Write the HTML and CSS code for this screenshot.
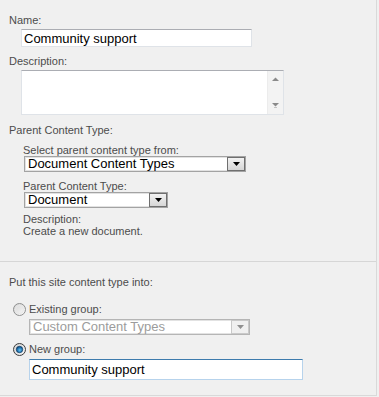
FILE: index.html
```html
<!DOCTYPE html>
<html>
<head>
<meta charset="utf-8">
<link rel="stylesheet" href="styles.css">
</head>
<body>
<div class="page">
  <section class="sec sec-top">
    <div class="lbl">Name:</div>
    <div class="textbox tb-name">Community support</div>
    <div class="lbl lbl-desc">Description:</div>
    <div class="textarea">
      <div class="ta-body"></div>
      <div class="ta-scroll">
        <svg width="7" height="5" viewBox="0 0 7 5"><polygon points="3.5,0.5 7,4 0,4" fill="#8a8a8a"/></svg>
        <svg width="7" height="5" viewBox="0 0 7 5"><polygon points="0,0 7,0 3.5,3.5" fill="#8a8a8a"/><rect x="2" y="4" width="3" height="1" fill="#c4c4c4"/></svg>
      </div>
    </div>
    <div class="lbl lbl-parent">Parent Content Type:</div>
    <div class="sub">
      <div class="sublbl">Select parent content type from:</div>
      <div class="select sel-from">
        <span class="sel-text">Document Content Types</span>
        <span class="sel-btn"><svg width="7" height="4" viewBox="0 0 7 4"><polygon points="0,0 7,0 3.5,4" fill="#000"/></svg></span>
      </div>
      <div class="sublbl sublbl-type">Parent Content Type:</div>
      <div class="select sel-type">
        <span class="sel-text">Document</span>
        <span class="sel-btn"><svg width="7" height="4" viewBox="0 0 7 4"><polygon points="0,0 7,0 3.5,4" fill="#000"/></svg></span>
      </div>
      <div class="sublbl sublbl-desc">Description:</div>
      <div class="sublbl">Create a new document.</div>
    </div>
  </section>
  <section class="sec sec-bottom">
    <div class="lbl">Put this site content type into:</div>
    <div class="radio-row row-existing">
      <svg class="radio" width="13" height="13" viewBox="0 0 13 13">
        <defs>
          <linearGradient id="rg1" x1="0" y1="0" x2="1" y2="1">
            <stop offset="0" stop-color="#d4d4d4"/>
            <stop offset="1" stop-color="#fbfbfb"/>
          </linearGradient>
        </defs>
        <circle cx="6.5" cy="6.5" r="6" fill="url(#rg1)" stroke="#8e8f8f"/>
        <circle cx="6.5" cy="6.5" r="4" fill="none" stroke="#e8e8e8"/>
      </svg>
      <span class="radio-lbl">Existing group:</span>
    </div>
    <div class="select sel-disabled">
      <span class="sel-text">Custom Content Types</span>
      <span class="sel-btn"><svg width="7" height="4" viewBox="0 0 7 4"><polygon points="0,0 7,0 3.5,4" fill="#8f8f8f"/></svg></span>
    </div>
    <div class="radio-row row-new">
      <svg class="radio" width="13" height="13" viewBox="0 0 13 13">
        <defs>
          <linearGradient id="rg2" x1="0" y1="0" x2="1" y2="1">
            <stop offset="0" stop-color="#cfcfcf"/>
            <stop offset="1" stop-color="#f8f8f8"/>
          </linearGradient>
          <radialGradient id="rg3" cx="0.55" cy="0.6" r="0.6">
            <stop offset="0" stop-color="#6cc4ee"/>
            <stop offset="0.6" stop-color="#1f78b8"/>
            <stop offset="1" stop-color="#0c3d6a"/>
          </radialGradient>
        </defs>
        <circle cx="6.5" cy="6.5" r="6" fill="url(#rg2)" stroke="#3c3c3c"/>
        <circle cx="6.5" cy="6.5" r="3.2" fill="url(#rg3)" stroke="#17426b" stroke-width="0.8"/>
      </svg>
      <span class="radio-lbl">New group:</span>
    </div>
    <div class="textbox tb-group">Community support</div>
  </section>
</div>
</body>
</html>
```
FILE: styles.css
```css
* { box-sizing: border-box; }
html, body { margin: 0; padding: 0; }
body {
  background: #f0f0f0;
  font-family: "Liberation Sans", Arial, sans-serif;
  font-size: 11px;
  color: #4c4c4c;
}
.page {
  width: 377px;
  height: 396px;
  border-right: 1px solid #d9d9d9;
  border-bottom: 1px solid #d9d9d9;
}
.sec-top {
  height: 262px;
  padding: 14px 0 0 9px;
  border-bottom: 1px solid #d6d6d6;
}
.sec-bottom {
  padding: 14px 0 0 9px;
}
.lbl {
  line-height: 13px;
  height: 13px;
}
.textbox {
  background: #fff;
  border: 1px solid #dfe3e8;
  border-top-color: #abadb3;
  font-family: "Liberation Sans", Arial, sans-serif;
  font-size: 13px;
  color: #000;
  padding-left: 2px;
  display: flex;
  align-items: center;
  white-space: nowrap;
}
.tb-name {
  margin: 2px 0 0 12px;
  width: 231px;
  height: 18px;
}
.lbl-desc { margin-top: 8px; }
.textarea {
  margin: 2px 0 0 12px;
  width: 263px;
  height: 45px;
  border: 1px solid #dfe3e8;
  border-top-color: #abadb3;
  background: #fff;
  display: flex;
}
.ta-body { flex: 1; }
.ta-scroll {
  width: 16px;
  background: #f3f3f3;
  border-left: 1px solid #ececec;
  display: flex;
  flex-direction: column;
  align-items: center;
  justify-content: space-between;
  padding: 6px 0 6px;
}
.lbl-parent { margin-top: 9px; }
.sub {
  margin: 7px 0 0 14px;
}
.sublbl {
  line-height: 12px;
  height: 12px;
}
.sublbl-type { margin-top: 8px; }
.sublbl-desc { margin-top: 5px; }
.select {
  display: flex;
  align-items: stretch;
  height: 16px;
  background: #fff;
  border: 1px solid #a3a3a3;
  box-shadow: inset 0 0 0 1px #e2e2e2;
  font-family: "Liberation Sans", Arial, sans-serif;
  font-size: 13px;
  color: #000;
}
.sel-text {
  flex: 1;
  padding-left: 3px;
  line-height: 14px;
  white-space: nowrap;
  overflow: hidden;
}
.sel-btn {
  width: 18px;
  display: flex;
  align-items: center;
  justify-content: center;
  border: 1px solid #6f6f6f;
  background: linear-gradient(#f2f2f2, #d6d6d6);
}
.sel-from { width: 222px; margin-left: 1px; }
.sel-type { width: 144px; margin-left: 1px; }
.radio-row {
  display: flex;
  align-items: center;
  height: 14px;
  padding-left: 4px;
}
.radio { display: block; margin-right: 3px; }
.radio-lbl { line-height: 13px; }
.row-existing { margin-top: 13px; }
.sel-disabled {
  margin: 3px 0 0 20px;
  width: 221px;
  color: #9c9c9c;
  border-color: #b5b5b5;
}
.sel-disabled .sel-btn {
  border-color: #c9c9c9;
  background: #f0f0f0;
}
.row-new { margin-top: 7px; }
.tb-group {
  margin: 3px 0 0 20px;
  width: 274px;
  height: 21px;
  border-color: #b7d3ec;
  border-top-color: #3d7bad;
  font-size: 13px;
}
```
